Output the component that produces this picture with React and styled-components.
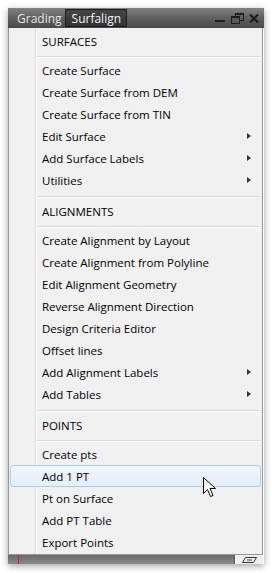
import React from 'react';
import styled, { createGlobalStyle } from 'styled-components';

const GlobalStyle = createGlobalStyle`
  html, body {
    margin: 0;
    padding: 0;
    background: #ffffff;
  }
  body {
    font-family: "Open Sans", "Noto Sans", sans-serif;
  }
`;

const Page = styled.div`
  width: 272px;
  height: 573px;
  padding: 8px 0 0 8px;
  box-sizing: border-box;
  background: #ffffff;
`;

const Window = styled.div`
  width: 256px;
  display: flex;
  flex-direction: column;
  box-shadow: 0 2px 7px rgba(0, 0, 0, 0.38);
`;

const TitleBar = styled.div`
  height: 20px;
  display: flex;
  align-items: center;
  padding: 0 4px 0 1px;
  background: linear-gradient(to bottom, #838383 0%, #626262 45%, #4a4a4a 100%);
`;

const Tab = styled.div`
  height: 18px;
  display: flex;
  align-items: center;
  padding: ${({ $active }) => ($active ? '0 5px 0 6px' : '0 2px 0 7px')};
  font-size: 12px;
  color: ${({ $active }) => ($active ? '#f4f4f4' : '#e6e6e6')};
  background: ${({ $active }) => ($active ? 'linear-gradient(to bottom, #454545, #323232)' : 'transparent')};
  border: 1px solid ${({ $active }) => ($active ? '#1c1c1c' : 'transparent')};
  box-sizing: border-box;
`;

const Spacer = styled.div`
  flex: 1;
`;

const WinControls = styled.div`
  display: flex;
  align-items: center;
  gap: 5px;
  padding-right: 1px;
`;

const Menu = styled.div`
  width: 255px;
  box-sizing: border-box;
  border: 1px solid #979797;
  border-top: none;
  padding: 1px;
  display: flex;
  flex-direction: column;
  background:
    linear-gradient(to right,
      transparent 26px,
      #dcdcdc 26px, #dcdcdc 27px,
      #ffffff 27px, #ffffff 28px,
      transparent 28px),
    #f0f0f0;
`;

const Header = styled.div`
  height: 27px;
  padding: 0 0 3px 32px;
  box-sizing: border-box;
  display: flex;
  align-items: center;
  font-size: 11.5px;
  color: #000;
`;

const Separator = styled.div`
  height: 1px;
  margin: ${({ $gap }) => $gap}px 0 1px 27px;
  background: #d7d7d7;
  border-bottom: 1px solid #ffffff;
`;

const Item = styled.div`
  position: relative;
  height: 22px;
  box-sizing: border-box;
  padding-left: 31px;
  display: flex;
  align-items: center;
  font-size: 11.5px;
  color: #000;
  border-radius: 3px;
  border: 1px solid ${({ $hot }) => ($hot ? '#a9cdf3' : 'transparent')};
  background: ${({ $hot }) => ($hot ? 'linear-gradient(to bottom, #f1f6fd, #e4eefa)' : 'transparent')};
`;

const Arrow = styled.span`
  position: absolute;
  right: 9px;
  top: 7px;
  width: 0;
  height: 0;
  border-top: 3.5px solid transparent;
  border-bottom: 3.5px solid transparent;
  border-left: 4px solid #333;
`;

const Cursor = styled.svg`
  position: absolute;
  left: 192px;
  top: 11px;
`;

const StatusBar = styled.div`
  height: 9px;
  width: 255px;
  display: flex;
  background: linear-gradient(to bottom, #6a6a6a, #8a8a8a);
`;

const RedMark = styled.div`
  width: 1px;
  margin-left: 10px;
  background: #d42020;
`;

const StatusTray = styled.div`
  width: 28px;
  display: flex;
  align-items: center;
  justify-content: center;
  background: #eeeeee;
  border-left: 1px solid #555;
  box-shadow: inset 1px 0 0 #ffffff;
`;

const sections = [
  {
    title: 'SURFACES',
    first: true,
    items: [
      { label: 'Create Surface' },
      { label: 'Create Surface from DEM' },
      { label: 'Create Surface from TIN' },
      { label: 'Edit Surface', sub: true },
      { label: 'Add Surface Labels', sub: true },
      { label: 'Utilities', sub: true },
    ],
  },
  {
    title: 'ALIGNMENTS',
    items: [
      { label: 'Create Alignment by Layout' },
      { label: 'Create Alignment from Polyline' },
      { label: 'Edit Alignment Geometry' },
      { label: 'Reverse Alignment Direction' },
      { label: 'Design Criteria Editor' },
      { label: 'Offset lines' },
      { label: 'Add Alignment Labels', sub: true },
      { label: 'Add Tables', sub: true },
    ],
  },
  {
    title: 'POINTS',
    items: [
      { label: 'Create pts' },
      { label: 'Add 1 PT', hot: true },
      { label: 'Pt on Surface' },
      { label: 'Add PT Table' },
      { label: 'Export Points' },
    ],
  },
];

const App = () => {
  return (
    <Page>
      <GlobalStyle />
      <Window>
        <TitleBar>
          <Tab>Grading</Tab>
          <Tab $active>Surfalign</Tab>
          <Spacer />
          <WinControls>
            <svg width="11" height="10" viewBox="0 0 11 10">
              <rect x="0" y="7" width="10" height="2" fill="#1e1e1e" />
            </svg>
            <svg width="13" height="11" viewBox="0 0 13 11">
              <rect x="4.5" y="0.5" width="8" height="7" fill="none" stroke="#1e1e1e" />
              <rect x="4.5" y="0.5" width="8" height="1.5" fill="#1e1e1e" />
              <rect x="0.5" y="3.5" width="8" height="7" fill="#555" stroke="#1e1e1e" />
              <rect x="0.5" y="3.5" width="8" height="1.5" fill="#1e1e1e" />
              <rect x="1.5" y="5.5" width="6" height="4" fill="#5a5a5a" />
            </svg>
            <svg width="10" height="9" viewBox="0 0 10 9">
              <path d="M1 0.5 L9 8.5 M9 0.5 L1 8.5" stroke="#1e1e1e" strokeWidth="2.2" />
            </svg>
          </WinControls>
        </TitleBar>
        <Menu>
          {sections.map((section) => (
            <React.Fragment key={section.title}>
              {!section.first && <Separator $gap={5} />}
              <Header>{section.title}</Header>
              <Separator $gap={0} />
              {section.items.map((item) => (
                <Item key={item.label} $hot={item.hot}>
                  {item.label}
                  {item.sub && <Arrow />}
                  {item.hot && (
                    <Cursor width="14" height="21" viewBox="0 0 14 21">
                      <path
                        d="M0.5 0.5 L0.5 16.5 L4.5 12.5 L7.5 19.5 L10 18.5 L7 11.5 L12.5 11.5 Z"
                        fill="#ffffff"
                        stroke="#000000"
                        strokeWidth="1"
                      />
                    </Cursor>
                  )}
                </Item>
              ))}
            </React.Fragment>
          ))}
        </Menu>
        <StatusBar>
          <RedMark />
          <Spacer />
          <StatusTray>
            <svg width="17" height="8" viewBox="0 0 17 8">
              <path d="M4.5 1.5 L15.5 1.5 L12.5 6.5 L1.5 6.5 Z" fill="none" stroke="#333" strokeWidth="1" />
              <path d="M6 4 L11 4" stroke="#333" strokeWidth="1" />
            </svg>
          </StatusTray>
        </StatusBar>
      </Window>
    </Page>
  );
};

export default App;
